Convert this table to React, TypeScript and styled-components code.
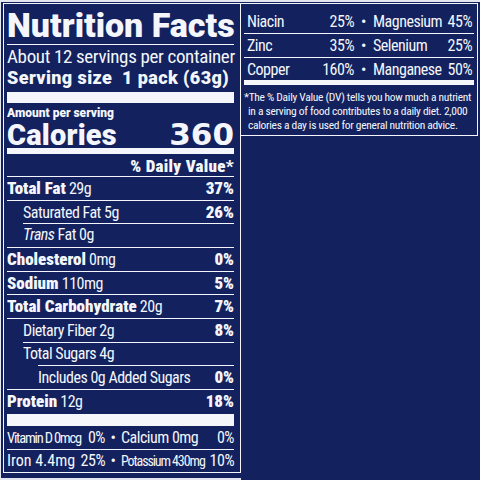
import React from "react";
import styled, { createGlobalStyle } from "styled-components";

const NAVY = "#13225e";
const INK = "#f4f6fb";
const PAGE = "#e3e6ee";
const NARROW = `"Roboto Condensed", Roboto, "Liberation Sans", Arial, sans-serif`;
const HEAVY = `Roboto, "Liberation Sans", Arial, sans-serif`;
const WIDE = `"DejaVu Sans", "Liberation Sans", Arial, sans-serif`;

const GlobalStyle = createGlobalStyle`
  html, body { margin: 0; padding: 0; background: ${PAGE}; }
  #root { width: 480px; height: 480px; }
  * { box-sizing: border-box; }
`;

const Page = styled.div`
  width: 480px;
  height: 480px;
  padding-top: 2px;
  display: grid;
  grid-template-columns: 241px 239px;
  background: ${PAGE};
  color: ${INK};
  font-family: ${NARROW};
  font-stretch: 75%;
  overflow: hidden;
`;

const LeftLabel = styled.section`
  margin: 0 0 2px 1px;
  padding: 1px 0 0 2px;
  background: ${NAVY};
`;

const Frame = styled.div`
  border: 1px solid ${INK};
  padding: 0 6px 0 3px;
  display: flex;
  flex-direction: column;
`;

const Title = styled.h1`
  margin: 0;
  padding: 5px 0 3px;
  font: 900 34px/32px ${HEAVY};
  font-stretch: 100%;
  border-bottom: 1px solid ${INK};
  white-space: nowrap;
`;

const Servings = styled.div`
  margin-top: 2px;
  font: 400 19px/19px ${NARROW};
  font-stretch: 75%;
  letter-spacing: -0.35px;
  white-space: nowrap;
`;

const ServingSize = styled.div`
  margin-top: 3px;
  font: 900 18px/18px ${HEAVY};
  font-stretch: 100%;
  letter-spacing: 0.4px;
  white-space: pre;
`;

const Bar = styled.div<{ $h: number; $mt: number }>`
  height: ${(p) => p.$h}px;
  margin-top: ${(p) => p.$mt}px;
  background: ${INK};
`;

const Amount = styled.div`
  margin-top: 4px;
  font: 900 12px/12px ${HEAVY};
  font-stretch: 100%;
`;

const CalRow = styled.div`
  margin-top: 1px;
  height: 28px;
  display: flex;
  justify-content: space-between;
  align-items: baseline;
`;

const Calories = styled.span`
  font: 900 29px/28px ${HEAVY};
  font-stretch: 100%;
  letter-spacing: 0.2px;
`;

const CalValue = styled.span`
  font: 700 31px/28px ${WIDE};
  font-stretch: 100%;
`;

const DvHeader = styled.div`
  margin: 4px 0 2px;
  font: 900 17px/16px ${HEAVY};
  font-stretch: 75%;
  letter-spacing: 0.3px;
  text-align: right;
`;

const Row = styled.div<{ $line: number; $text: number; $h: string }>`
  height: ${(p) => p.$h};
  margin-left: ${(p) => p.$line}px;
  padding: 3px 0 0 ${(p) => p.$text - p.$line}px;
  border-top: 1px solid ${INK};
  display: flex;
  justify-content: space-between;
  align-items: baseline;
  font: 400 16px/16px ${NARROW};
  font-stretch: 75%;
  letter-spacing: -0.5px;
  white-space: nowrap;
`;

const B = styled.b`
  font: 900 17px/16px ${HEAVY};
  font-stretch: 75%;
  letter-spacing: 0;
`;

const I = styled.i`
  font-style: italic;
`;

const Micro = styled.div<{ $top: boolean }>`
  height: 23px;
  padding-top: ${(p) => (p.$top ? 3 : 4)}px;
  border-top: ${(p) => (p.$top ? `1px solid ${INK}` : "none")};
  display: grid;
  grid-template-columns: 98px 16px 1fr auto;
  align-items: baseline;
  font: 400 16px/16px ${NARROW};
  font-stretch: 75%;
  letter-spacing: -0.5px;
  white-space: nowrap;
`;

const Pair = styled.span`
  display: flex;
  justify-content: space-between;
  align-items: baseline;
`;

const Tight = styled.span<{ $size: number; $ls: number }>`
  font-size: ${(p) => p.$size}px;
  letter-spacing: ${(p) => p.$ls}px;
`;

const Dot = styled.span`
  text-align: center;
`;

const RightCol = styled.section`
  background: ${NAVY};
`;

const RightFrame = styled.div`
  margin: 1px 2px 0 0;
  border: 1px solid ${INK};
  border-left: none;
  padding: 6px 3px 3px 3px;
  display: flex;
  flex-direction: column;
`;

const RRow = styled.div<{ $last?: boolean }>`
  height: ${(p) => (p.$last ? 22 : 24)}px;
  padding: 4px 2px 0 3px;
  border-bottom: ${(p) => (p.$last ? "none" : `1px solid ${INK}`)};
  display: grid;
  grid-template-columns: 107px 19px 1fr auto;
  align-items: baseline;
  font: 400 16px/16px ${NARROW};
  font-stretch: 75%;
  letter-spacing: -0.5px;
  white-space: nowrap;
`;

const Note = styled.p`
  margin: 5px 0 0;
  padding-left: 4px;
  text-indent: -4px;
  font: 400 11.5px/14px ${NARROW};
  font-stretch: 75%;
  letter-spacing: -0.3px;
  white-space: nowrap;
`;

type Nutrient = {
  bold?: string;
  amount?: string;
  regular?: React.ReactNode;
  dv?: string;
  line?: number;
  text?: number;
  h?: string;
};

const rows: Nutrient[] = [
  { bold: "Total Fat", amount: "29g", dv: "37%" },
  { regular: "Saturated Fat 5g", dv: "26%", text: 16 },
  { regular: <><I>Trans</I> Fat 0g</>, line: 16, text: 16 },
  { bold: "Cholesterol", amount: "0mg", dv: "0%" },
  { bold: "Sodium", amount: "110mg", dv: "5%" },
  { bold: "Total Carbohydrate", amount: "20g", dv: "7%" },
  { regular: "Dietary Fiber 2g", dv: "8%", text: 16 },
  { regular: "Total Sugars 4g", line: 16, text: 16 },
  { regular: "Includes 0g Added Sugars", dv: "0%", line: 31, text: 31 },
  { bold: "Protein", amount: "12g", dv: "18%", h: "24px" },
];

const minerals = [
  ["Niacin", "25%", "Magnesium", "45%"],
  ["Zinc", "35%", "Selenium", "25%"],
  ["Copper", "160%", "Manganese", "50%"],
];

export default function App() {
  return (
    <>
      <GlobalStyle />
      <Page>
        <LeftLabel>
          <Frame>
            <Title>Nutrition Facts</Title>
            <Servings>About 12 servings per container</Servings>
            <ServingSize>{"Serving size  1 pack (63g)"}</ServingSize>
            <Bar $h={11} $mt={5} />
            <Amount>Amount per serving</Amount>
            <CalRow>
              <Calories>Calories</Calories>
              <CalValue>360</CalValue>
            </CalRow>
            <Bar $h={6} $mt={0} />
            <DvHeader>% Daily Value*</DvHeader>
            {rows.map((r, i) => (
              <Row key={i} $line={r.line ?? 0} $text={r.text ?? 0} $h={r.h ?? "23.667px"}>
                <span>
                  {r.bold ? (
                    <>
                      <B>{r.bold}</B> {r.amount}
                    </>
                  ) : (
                    r.regular
                  )}
                </span>
                {r.dv && <B>{r.dv}</B>}
              </Row>
            ))}
            <Bar $h={12} $mt={1} />
            <Micro $top={false}>
              <Pair>
                <Tight $size={14.5} $ls={-1.2}>Vitamin D 0mcg</Tight>
                <span>0%</span>
              </Pair>
              <Dot>•</Dot>
              <span>Calcium 0mg</span>
              <span>0%</span>
            </Micro>
            <Micro $top>
              <Pair>
                <Tight $size={16} $ls={0}>Iron 4.4mg</Tight>
                <span>25%</span>
              </Pair>
              <Dot>•</Dot>
              <Tight $size={14} $ls={-1.1}>Potassium 430mg</Tight>
              <span>10%</span>
            </Micro>
          </Frame>
        </LeftLabel>
        <RightCol>
          <RightFrame>
            {minerals.map((m, i) => (
              <RRow key={m[0]} $last={i === minerals.length - 1}>
                <Pair>
                  <span>{m[0]}</span>
                  <span>{m[1]}</span>
                </Pair>
                <Dot>•</Dot>
                <span>{m[2]}</span>
                <span>{m[3]}</span>
              </RRow>
            ))}
            <Bar $h={5} $mt={0} />
            <Note>
              *The % Daily Value (DV) tells you how much a nutrient
              <br />
              in a serving of food contributes to a daily diet. 2,000
              <br />
              calories a day is used for general nutrition advice.
            </Note>
          </RightFrame>
        </RightCol>
      </Page>
    </>
  );
}
